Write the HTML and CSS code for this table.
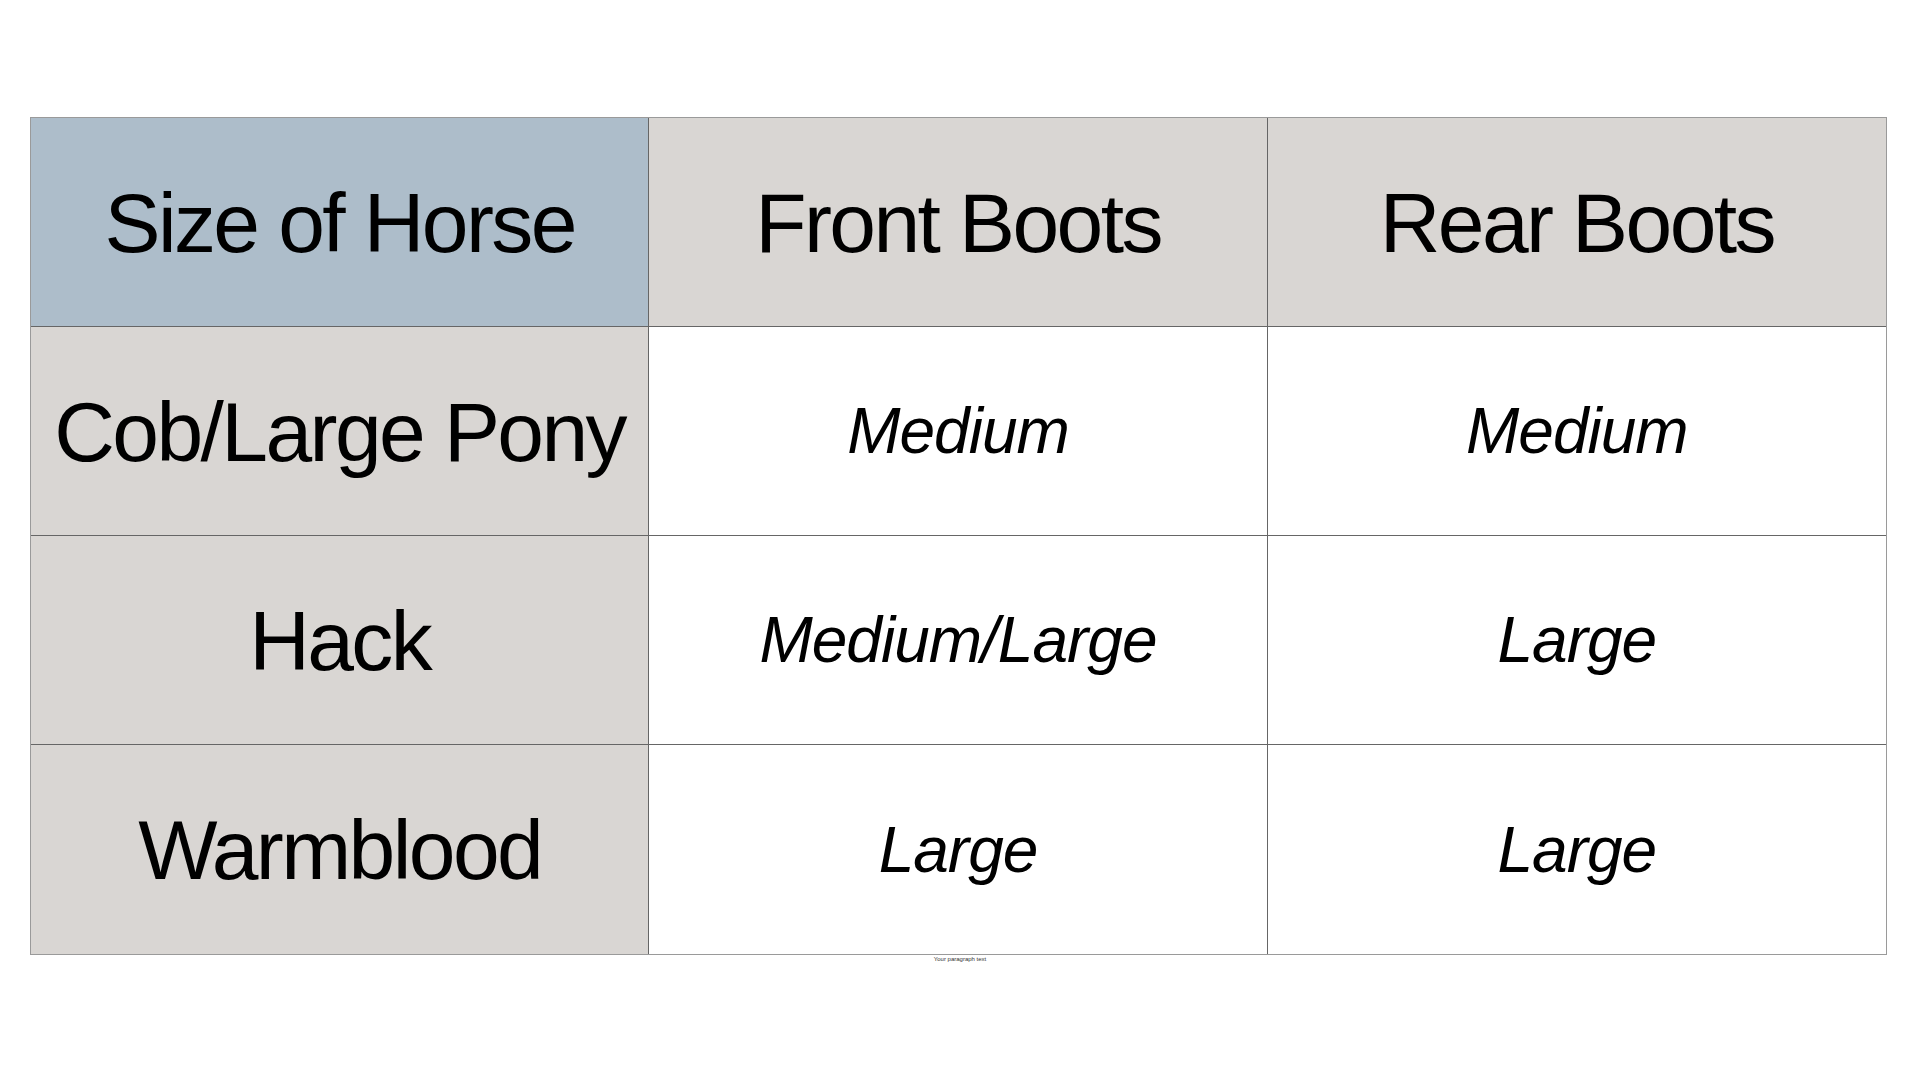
FILE: index.html
```html
<!DOCTYPE html>
<html>
<head>
<meta charset="utf-8">
<link rel="stylesheet" href="styles.css">
</head>
<body>
<div class="page">
  <div class="grid">
    <div class="cell head accent">Size of Horse</div>
    <div class="cell head">Front Boots</div>
    <div class="cell head">Rear Boots</div>

    <div class="cell label">Cob/Large Pony</div>
    <div class="cell value">Medium</div>
    <div class="cell value">Medium</div>

    <div class="cell label">Hack</div>
    <div class="cell value">Medium/Large</div>
    <div class="cell value">Large</div>

    <div class="cell label">Warmblood</div>
    <div class="cell value">Large</div>
    <div class="cell value">Large</div>
  </div>
  <div class="note">Your paragraph text</div>
</div>
</body>
</html>
```

FILE: styles.css
```css
html, body {
  margin: 0;
  padding: 0;
  background: #ffffff;
}
.page {
  width: 1920px;
  height: 1080px;
  padding-top: 117px;
  box-sizing: border-box;
  font-family: "Liberation Sans", Arial, sans-serif;
}
.grid {
  margin-left: 30px;
  width: 1857px;
  display: grid;
  grid-template-columns: 1fr 1fr 1fr;
  grid-template-rows: 209px 209px 209px 209px;
  border: 1px solid #9a9a9a;
  box-sizing: border-box;
}
.cell {
  display: flex;
  align-items: center;
  justify-content: center;
  border-right: 1px solid #666666;
  border-bottom: 1px solid #666666;
  color: #000;
  white-space: nowrap;
  min-width: 0;
}
.cell:nth-child(3n) { border-right: none; }
.cell:nth-last-child(-n+3) { border-bottom: none; }
.head, .label {
  background: #d9d6d3;
  font-size: 84px;
  letter-spacing: -2.6px;
  padding-top: 2px;
}
.accent { background: #adbdca; }
.value {
  background: #ffffff;
  font-size: 64px;
  font-style: italic;
  letter-spacing: -1px;
}
.note {
  text-align: center;
  font-size: 6px;
  color: #333;
  line-height: 8px;
}
```
